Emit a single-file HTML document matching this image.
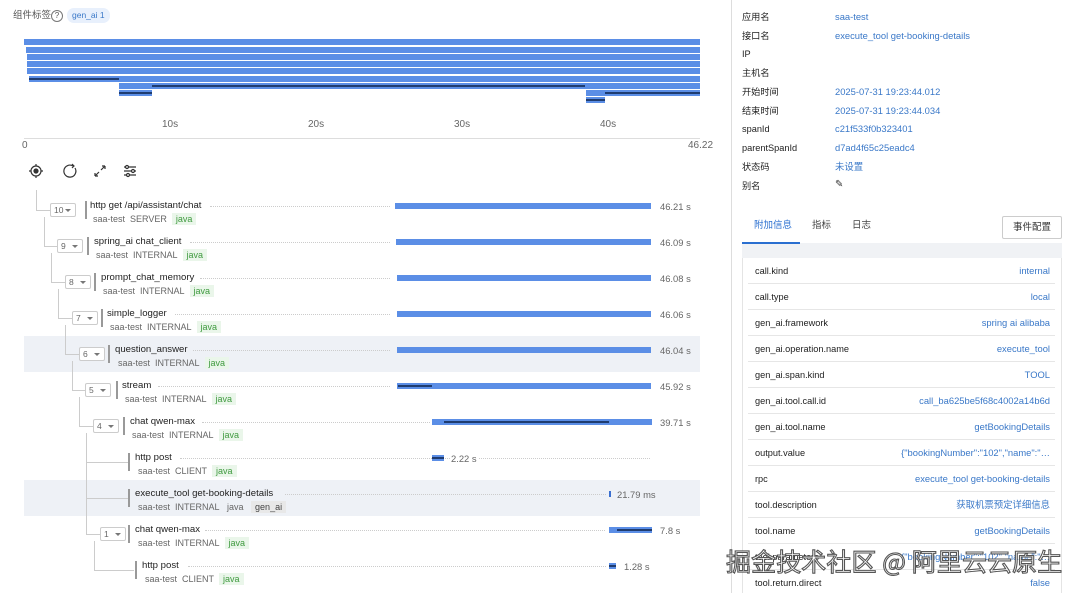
<!DOCTYPE html>
<html><head><meta charset="utf-8"><style>
*{margin:0;padding:0;box-sizing:border-box}
body{width:1080px;height:593px;overflow:hidden;background:#fff;font-family:"Liberation Sans","Noto Sans CJK SC",sans-serif;color:#333;position:relative}
.a{position:absolute;white-space:nowrap;line-height:12px}
.t{font-size:9.6px;color:#222}
.s{font-size:9px;color:#666}
.j{background:#eaf6ea;color:#3f9a3f;padding:1px 4px;font-size:9px}
.g{background:#e8e8e8;color:#444;padding:1px 4px;font-size:9px}
.bx{position:absolute;width:26px;height:14px;border:1px solid #ccc;border-radius:2px;font-size:8.5px;color:#666;padding-left:3px;line-height:12px;background:#fff}
.bx:after{content:"";position:absolute;right:4px;top:5px;border-left:3px solid transparent;border-right:3px solid transparent;border-top:3px solid #777}
.vb{position:absolute;width:2px;height:18px;background:#999}
.ln{position:absolute;background:#ccc}
.dot{position:absolute;border-top:1px dotted #ccc;height:0}
.bar{position:absolute;height:6px;background:#5b8ee6}
.dk{position:absolute;height:2px;background:#1f3c70}
.d{font-size:9.4px;color:#666}
.hl{position:absolute;left:24px;width:676px;height:36px;background:#eef1f6}
.mb{position:absolute;height:6px;background:#5b8ee6}
.rl{font-size:9.2px;color:#222}
.rv{font-size:9.4px;color:#3a78c8}
.tr{position:absolute;left:748px;width:307px;height:26px;border-bottom:1px solid #e6e6e6}
.tr span{position:absolute;top:7px;line-height:12px;white-space:nowrap}
.tr .k{left:7px;font-size:9.2px;color:#222}
.tr .v{right:5px;font-size:9.4px;color:#3a78c8}
</style></head><body>
<!-- header -->
<div class="a" style="left:13px;top:10px;font-size:9.5px;color:#555">组件标签</div>
<div class="a" style="left:51px;top:10px;width:12px;height:12px;border:1px solid #777;border-radius:50%;font-size:8px;text-align:center;line-height:10px;color:#555">?</div>
<div class="a" style="left:67px;top:8px;height:15px;padding:0 5px;border-radius:7px;background:#e8f0fc;color:#3a78c8;font-size:8.5px;line-height:15px">gen_ai 1</div>
<!-- minimap -->
<div class="mb" style="left:24px;width:676px;top:39px"></div>
<div class="mb" style="left:26px;width:674px;top:47px"></div>
<div class="mb" style="left:27px;width:673px;top:54px"></div>
<div class="mb" style="left:27px;width:673px;top:61px"></div>
<div class="mb" style="left:27px;width:673px;top:68px"></div>
<div class="mb" style="left:29px;width:671px;top:76px"></div>
<div class="dk" style="left:29px;width:90px;top:78px"></div>
<div class="mb" style="left:119px;width:581px;top:83px"></div>
<div class="dk" style="left:152px;width:433px;top:85px"></div>
<div class="mb" style="left:119px;width:33px;top:90px"></div>
<div class="dk" style="left:119px;width:33px;top:92px"></div>
<div class="mb" style="left:586px;width:114px;top:90px"></div>
<div class="dk" style="left:605px;width:95px;top:92px"></div>
<div class="mb" style="left:586px;width:19px;top:97px"></div>
<div class="dk" style="left:586px;width:19px;top:99px"></div>
<div class="ln" style="left:24px;width:676px;top:138px;height:1px;background:#ddd"></div>
<div class="a d" style="left:162px;top:119px;font-size:10px">10s</div>
<div class="a d" style="left:308px;top:119px;font-size:10px">20s</div>
<div class="a d" style="left:454px;top:119px;font-size:10px">30s</div>
<div class="a d" style="left:600px;top:119px;font-size:10px">40s</div>
<div class="a d" style="left:22px;top:140px;font-size:10px">0</div>
<div class="a d" style="left:688px;top:140px;font-size:10px">46.22</div>
<!-- toolbar icons -->
<svg class="a" style="left:28px;top:163px" width="120" height="16" viewBox="0 0 120 16" fill="none" stroke="#333" stroke-width="1.2">
<circle cx="8" cy="8" r="5"/><circle cx="8" cy="8" r="2" fill="#333"/><path d="M8 1v2M8 13v2M1 8h2M13 8h2"/>
<path d="M45 3a6 6 0 1 0 2 2" /><path d="M44 1l2 2-2 2"/>
<path d="M67 13l4-4M67 13v-3M67 13h3M77 3l-4 4M77 3v3M77 3h-3"/>
<path d="M96 4h12M96 8h12M96 12h12"/><circle cx="99" cy="4" r="1.5" fill="#fff"/><circle cx="105" cy="8" r="1.5" fill="#fff"/><circle cx="100" cy="12" r="1.5" fill="#fff"/>
</svg>
<!-- highlights -->
<div class="hl" style="top:336px"></div>
<div class="hl" style="top:480px"></div>
<!-- tree lines -->
<div class="ln" style="left:36px;top:190px;width:1px;height:20px"></div><div class="ln" style="left:36px;top:210px;width:14px;height:1px"></div>
<div class="ln" style="left:44px;top:217px;width:1px;height:29px"></div><div class="ln" style="left:44px;top:246px;width:13px;height:1px"></div>
<div class="ln" style="left:51px;top:253px;width:1px;height:29px"></div><div class="ln" style="left:51px;top:282px;width:14px;height:1px"></div>
<div class="ln" style="left:58px;top:289px;width:1px;height:29px"></div><div class="ln" style="left:58px;top:318px;width:14px;height:1px"></div>
<div class="ln" style="left:65px;top:325px;width:1px;height:29px"></div><div class="ln" style="left:65px;top:354px;width:14px;height:1px"></div>
<div class="ln" style="left:72px;top:361px;width:1px;height:29px"></div><div class="ln" style="left:72px;top:390px;width:13px;height:1px"></div>
<div class="ln" style="left:79px;top:397px;width:1px;height:29px"></div><div class="ln" style="left:79px;top:426px;width:14px;height:1px"></div>
<div class="ln" style="left:86px;top:433px;width:1px;height:102px"></div>
<div class="ln" style="left:86px;top:462px;width:42px;height:1px"></div>
<div class="ln" style="left:86px;top:498px;width:42px;height:1px"></div>
<div class="ln" style="left:86px;top:534px;width:14px;height:1px"></div>
<div class="ln" style="left:94px;top:541px;width:1px;height:29px"></div><div class="ln" style="left:94px;top:570px;width:40px;height:1px"></div>
<!-- rows -->
<div class="bx" style="left:50px;top:203px">10</div><div class="vb" style="left:85px;top:201px"></div>
<div class="a t" style="left:90px;top:200px">http get /api/assistant/chat</div>
<div class="a s" style="left:93px;top:213px">saa-test&nbsp;&nbsp;SERVER&nbsp;&nbsp;<span class="j">java</span></div>
<div class="dot" style="left:210px;width:180px;top:206px"></div>
<div class="bar" style="left:395px;width:256px;top:203px"></div><div class="a d" style="left:660px;top:201px">46.21 s</div>

<div class="bx" style="left:57px;top:239px">9</div><div class="vb" style="left:87px;top:237px"></div>
<div class="a t" style="left:94px;top:236px">spring_ai chat_client</div>
<div class="a s" style="left:96px;top:249px">saa-test&nbsp;&nbsp;INTERNAL&nbsp;&nbsp;<span class="j">java</span></div>
<div class="dot" style="left:190px;width:200px;top:242px"></div>
<div class="bar" style="left:396px;width:255px;top:239px"></div><div class="a d" style="left:660px;top:237px">46.09 s</div>

<div class="bx" style="left:65px;top:275px">8</div><div class="vb" style="left:94px;top:273px"></div>
<div class="a t" style="left:101px;top:272px">prompt_chat_memory</div>
<div class="a s" style="left:103px;top:285px">saa-test&nbsp;&nbsp;INTERNAL&nbsp;&nbsp;<span class="j">java</span></div>
<div class="dot" style="left:200px;width:190px;top:278px"></div>
<div class="bar" style="left:397px;width:254px;top:275px"></div><div class="a d" style="left:660px;top:273px">46.08 s</div>

<div class="bx" style="left:72px;top:311px">7</div><div class="vb" style="left:101px;top:309px"></div>
<div class="a t" style="left:107px;top:308px">simple_logger</div>
<div class="a s" style="left:110px;top:321px">saa-test&nbsp;&nbsp;INTERNAL&nbsp;&nbsp;<span class="j">java</span></div>
<div class="dot" style="left:175px;width:215px;top:314px"></div>
<div class="bar" style="left:397px;width:254px;top:311px"></div><div class="a d" style="left:660px;top:309px">46.06 s</div>

<div class="bx" style="left:79px;top:347px">6</div><div class="vb" style="left:108px;top:345px"></div>
<div class="a t" style="left:115px;top:344px">question_answer</div>
<div class="a s" style="left:118px;top:357px">saa-test&nbsp;&nbsp;INTERNAL&nbsp;&nbsp;<span class="j">java</span></div>
<div class="dot" style="left:193px;width:197px;top:350px"></div>
<div class="bar" style="left:397px;width:254px;top:347px"></div><div class="a d" style="left:660px;top:345px">46.04 s</div>

<div class="bx" style="left:85px;top:383px">5</div><div class="vb" style="left:116px;top:381px"></div>
<div class="a t" style="left:122px;top:380px">stream</div>
<div class="a s" style="left:125px;top:393px">saa-test&nbsp;&nbsp;INTERNAL&nbsp;&nbsp;<span class="j">java</span></div>
<div class="dot" style="left:158px;width:232px;top:386px"></div>
<div class="bar" style="left:397px;width:254px;top:383px"></div><div class="dk" style="left:398px;width:34px;top:385px"></div><div class="a d" style="left:660px;top:381px">45.92 s</div>

<div class="bx" style="left:93px;top:419px">4</div><div class="vb" style="left:123px;top:417px"></div>
<div class="a t" style="left:130px;top:416px">chat qwen-max</div>
<div class="a s" style="left:132px;top:429px">saa-test&nbsp;&nbsp;INTERNAL&nbsp;&nbsp;<span class="j">java</span></div>
<div class="dot" style="left:202px;width:228px;top:422px"></div>
<div class="bar" style="left:432px;width:220px;top:419px"></div><div class="dk" style="left:444px;width:165px;top:421px"></div><div class="a d" style="left:660px;top:417px">39.71 s</div>

<div class="vb" style="left:128px;top:453px"></div>
<div class="a t" style="left:135px;top:452px">http post</div>
<div class="a s" style="left:138px;top:465px">saa-test&nbsp;&nbsp;CLIENT&nbsp;&nbsp;<span class="j">java</span></div>
<div class="dot" style="left:180px;width:470px;top:458px"></div>
<div class="bar" style="left:432px;width:12px;top:455px"></div><div class="dk" style="left:432px;width:12px;top:457px"></div>
<div class="a d" style="left:451px;top:453px;background:#fff;padding-right:2px">2.22 s</div>

<div class="vb" style="left:128px;top:489px"></div>
<div class="a t" style="left:135px;top:488px">execute_tool get-booking-details</div>
<div class="a s" style="left:138px;top:501px">saa-test&nbsp;&nbsp;INTERNAL&nbsp;&nbsp;&nbsp;java&nbsp;&nbsp;&nbsp;<span class="g">gen_ai</span></div>
<div class="dot" style="left:285px;width:321px;top:494px"></div>
<div class="bar" style="left:609px;width:2px;top:491px;background:#3a6fd0"></div><div class="a d" style="left:617px;top:489px">21.79 ms</div>

<div class="bx" style="left:100px;top:527px">1</div><div class="vb" style="left:128px;top:525px"></div>
<div class="a t" style="left:135px;top:524px">chat qwen-max</div>
<div class="a s" style="left:138px;top:537px">saa-test&nbsp;&nbsp;INTERNAL&nbsp;&nbsp;<span class="j">java</span></div>
<div class="dot" style="left:205px;width:400px;top:530px"></div>
<div class="bar" style="left:609px;width:43px;top:527px"></div><div class="dk" style="left:617px;width:35px;top:529px"></div><div class="a d" style="left:660px;top:525px">7.8 s</div>

<div class="vb" style="left:135px;top:561px"></div>
<div class="a t" style="left:142px;top:560px">http post</div>
<div class="a s" style="left:145px;top:573px">saa-test&nbsp;&nbsp;CLIENT&nbsp;&nbsp;<span class="j">java</span></div>
<div class="dot" style="left:188px;width:418px;top:566px"></div>
<div class="bar" style="left:609px;width:7px;top:563px"></div><div class="dk" style="left:609px;width:7px;top:565px"></div><div class="a d" style="left:624px;top:561px">1.28 s</div>

<!-- divider -->
<div class="ln" style="left:731px;top:0;width:1px;height:593px;background:#ddd"></div>
<!-- right info -->
<div class="a rl" style="left:742px;top:11px">应用名</div><div class="a rv" style="left:835px;top:11px">saa-test</div>
<div class="a rl" style="left:742px;top:30px">接口名</div><div class="a rv" style="left:835px;top:30px">execute_tool get-booking-details</div>
<div class="a rl" style="left:742px;top:48px">IP</div>
<div class="a rl" style="left:742px;top:67px">主机名</div>
<div class="a rl" style="left:742px;top:86px">开始时间</div><div class="a rv" style="left:835px;top:86px">2025-07-31 19:23:44.012</div>
<div class="a rl" style="left:742px;top:105px">结束时间</div><div class="a rv" style="left:835px;top:105px">2025-07-31 19:23:44.034</div>
<div class="a rl" style="left:742px;top:123px">spanId</div><div class="a rv" style="left:835px;top:123px">c21f533f0b323401</div>
<div class="a rl" style="left:742px;top:142px">parentSpanId</div><div class="a rv" style="left:835px;top:142px">d7ad4f65c25eadc4</div>
<div class="a rl" style="left:742px;top:161px">状态码</div><div class="a rv" style="left:835px;top:161px">未设置</div>
<div class="a rl" style="left:742px;top:180px">别名</div><div class="a" style="left:835px;top:179px;font-size:10px;color:#333">✎</div>
<!-- tabs -->
<div class="a" style="left:754px;top:220px;font-size:9.5px;color:#2a6fd0">附加信息</div>
<div class="a" style="left:812px;top:220px;font-size:9.5px;color:#444">指标</div>
<div class="a" style="left:852px;top:220px;font-size:9.5px;color:#444">日志</div>
<div class="a" style="left:1002px;top:216px;width:60px;height:23px;border:1px solid #ccc;border-radius:2px;font-size:9.5px;line-height:21px;text-align:center;color:#333">事件配置</div>
<div class="a" style="left:742px;top:243px;width:320px;height:350px;border-left:1px solid #e4e4e4;border-right:1px solid #e4e4e4"></div>
<div class="a" style="left:742px;top:243px;width:320px;height:15px;background:#f0f2f5"></div>
<div class="a" style="left:742px;top:242px;width:58px;height:2px;background:#2a6fd0"></div>
<div class="tr" style="top:258px"><span class="k">call.kind</span><span class="v">internal</span></div>
<div class="tr" style="top:284px"><span class="k">call.type</span><span class="v">local</span></div>
<div class="tr" style="top:310px"><span class="k">gen_ai.framework</span><span class="v">spring ai alibaba</span></div>
<div class="tr" style="top:336px"><span class="k">gen_ai.operation.name</span><span class="v">execute_tool</span></div>
<div class="tr" style="top:362px"><span class="k">gen_ai.span.kind</span><span class="v">TOOL</span></div>
<div class="tr" style="top:388px"><span class="k">gen_ai.tool.call.id</span><span class="v">call_ba625be5f68c4002a14b6d</span></div>
<div class="tr" style="top:414px"><span class="k">gen_ai.tool.name</span><span class="v">getBookingDetails</span></div>
<div class="tr" style="top:440px"><span class="k">output.value</span><span class="v">{"bookingNumber":"102","name":"…</span></div>
<div class="tr" style="top:466px"><span class="k">rpc</span><span class="v">execute_tool get-booking-details</span></div>
<div class="tr" style="top:492px"><span class="k">tool.description</span><span class="v">获取机票预定详细信息</span></div>
<div class="tr" style="top:518px"><span class="k">tool.name</span><span class="v">getBookingDetails</span></div>
<div class="tr" style="top:544px"><span class="k">tool.parameters</span><span class="v">{"bookingNumber":"102","name":"…</span></div>
<div class="tr" style="top:570px;border:none"><span class="k">tool.return.direct</span><span class="v">false</span></div>
<!-- watermark -->
<div class="a" style="left:726px;top:545px;font-size:25px;color:#fff;font-family:'Noto Sans CJK SC',sans-serif;-webkit-text-stroke:1.1px #555;letter-spacing:0.1px;line-height:32px">掘金技术社区 @ 阿里云云原生</div>
</body></html>
